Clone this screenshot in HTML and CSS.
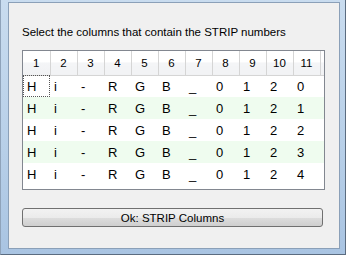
FILE: index.html
```html
<!DOCTYPE html>
<html lang="en">
<head>
    <meta charset="UTF-8">
    <title>Select STRIP columns</title>
    <link rel="stylesheet" href="styles.css">
</head>
<body>
    <div class="window">
        <div class="client">
            <p class="prompt">Select the columns that contain the STRIP numbers</p>
            <div class="list">
                <table>
                    <thead>
                        <tr>
                            <th>1</th><th>2</th><th>3</th><th>4</th><th>5</th><th>6</th>
                            <th>7</th><th>8</th><th>9</th><th>10</th><th>11</th><th class="filler"></th>
                        </tr>
                    </thead>
                    <tbody>
                        <tr>
                            <td class="focus">H</td><td>i</td><td>-</td><td>R</td><td>G</td><td>B</td>
                            <td>_</td><td>0</td><td>1</td><td>2</td><td>0</td><td></td>
                        </tr>
                        <tr class="alt">
                            <td>H</td><td>i</td><td>-</td><td>R</td><td>G</td><td>B</td>
                            <td>_</td><td>0</td><td>1</td><td>2</td><td>1</td><td></td>
                        </tr>
                        <tr>
                            <td>H</td><td>i</td><td>-</td><td>R</td><td>G</td><td>B</td>
                            <td>_</td><td>0</td><td>1</td><td>2</td><td>2</td><td></td>
                        </tr>
                        <tr class="alt">
                            <td>H</td><td>i</td><td>-</td><td>R</td><td>G</td><td>B</td>
                            <td>_</td><td>0</td><td>1</td><td>2</td><td>3</td><td></td>
                        </tr>
                        <tr>
                            <td>H</td><td>i</td><td>-</td><td>R</td><td>G</td><td>B</td>
                            <td>_</td><td>0</td><td>1</td><td>2</td><td>4</td><td></td>
                        </tr>
                    </tbody>
                </table>
            </div>
            <button type="button" class="ok">Ok: STRIP Columns</button>
        </div>
    </div>
</body>
</html>
```

FILE: styles.css
```css
body {
    margin: 0;
    font-family: 'Liberation Sans', Arial, sans-serif;
    font-size: 11.5px;
    color: #000;
}
.window {
    width: 346px;
    height: 255px;
    box-sizing: border-box;
    padding: 2px 5px 5px 7px;
    background: linear-gradient(to bottom, #c9dcef, #b7cfe8 60%, #a9c4e2);
    border-right: 1px solid #5b6c80;
    border-bottom: 1px solid #5b6c80;
    border-left: 1px solid #8fa3ba;
}
.client {
    height: 100%;
    box-sizing: border-box;
    background: #f0f0f0;
    border: 1px solid #8ba0b8;
    padding: 0 0 0 13px;
}
.prompt {
    margin: 0;
    padding-top: 22px;
    height: 25px;
    line-height: 15px;
}
.list {
    width: 303px;
    height: 140px;
    box-sizing: border-box;
    border: 1px solid #828790;
    background: #fff;
}
table {
    border-collapse: collapse;
    table-layout: fixed;
    width: 301px;
}
th {
    width: 27px;
    height: 24px;
    padding: 0;
    font-weight: normal;
    text-align: center;
    background: linear-gradient(to bottom, #fff, #fff 45%, #f4f5f7 50%, #f1f2f4);
    border-right: 1px solid #d5d5d5;
    border-bottom: 1px solid #d5d5d5;
    box-sizing: border-box;
}
th.filler {
    width: auto;
    border-right: none;
}
td {
    height: 22px;
    padding: 0 0 0 4px;
    font-size: 13px;
    text-align: left;
    box-sizing: border-box;
}
td.focus {
    outline: 1px dotted #555;
    outline-offset: -1px;
}
tr.alt td {
    background: #effcef;
}
.ok {
    display: block;
    margin-top: 18px;
    width: 301px;
    height: 19px;
    padding: 0;
    font-family: inherit;
    font-size: 11.5px;
    color: #000;
    border: 1px solid #707070;
    border-radius: 3px;
    background: linear-gradient(to bottom, #f2f2f2, #ebebeb 50%, #dddddd 51%, #cfcfcf);
}
```
